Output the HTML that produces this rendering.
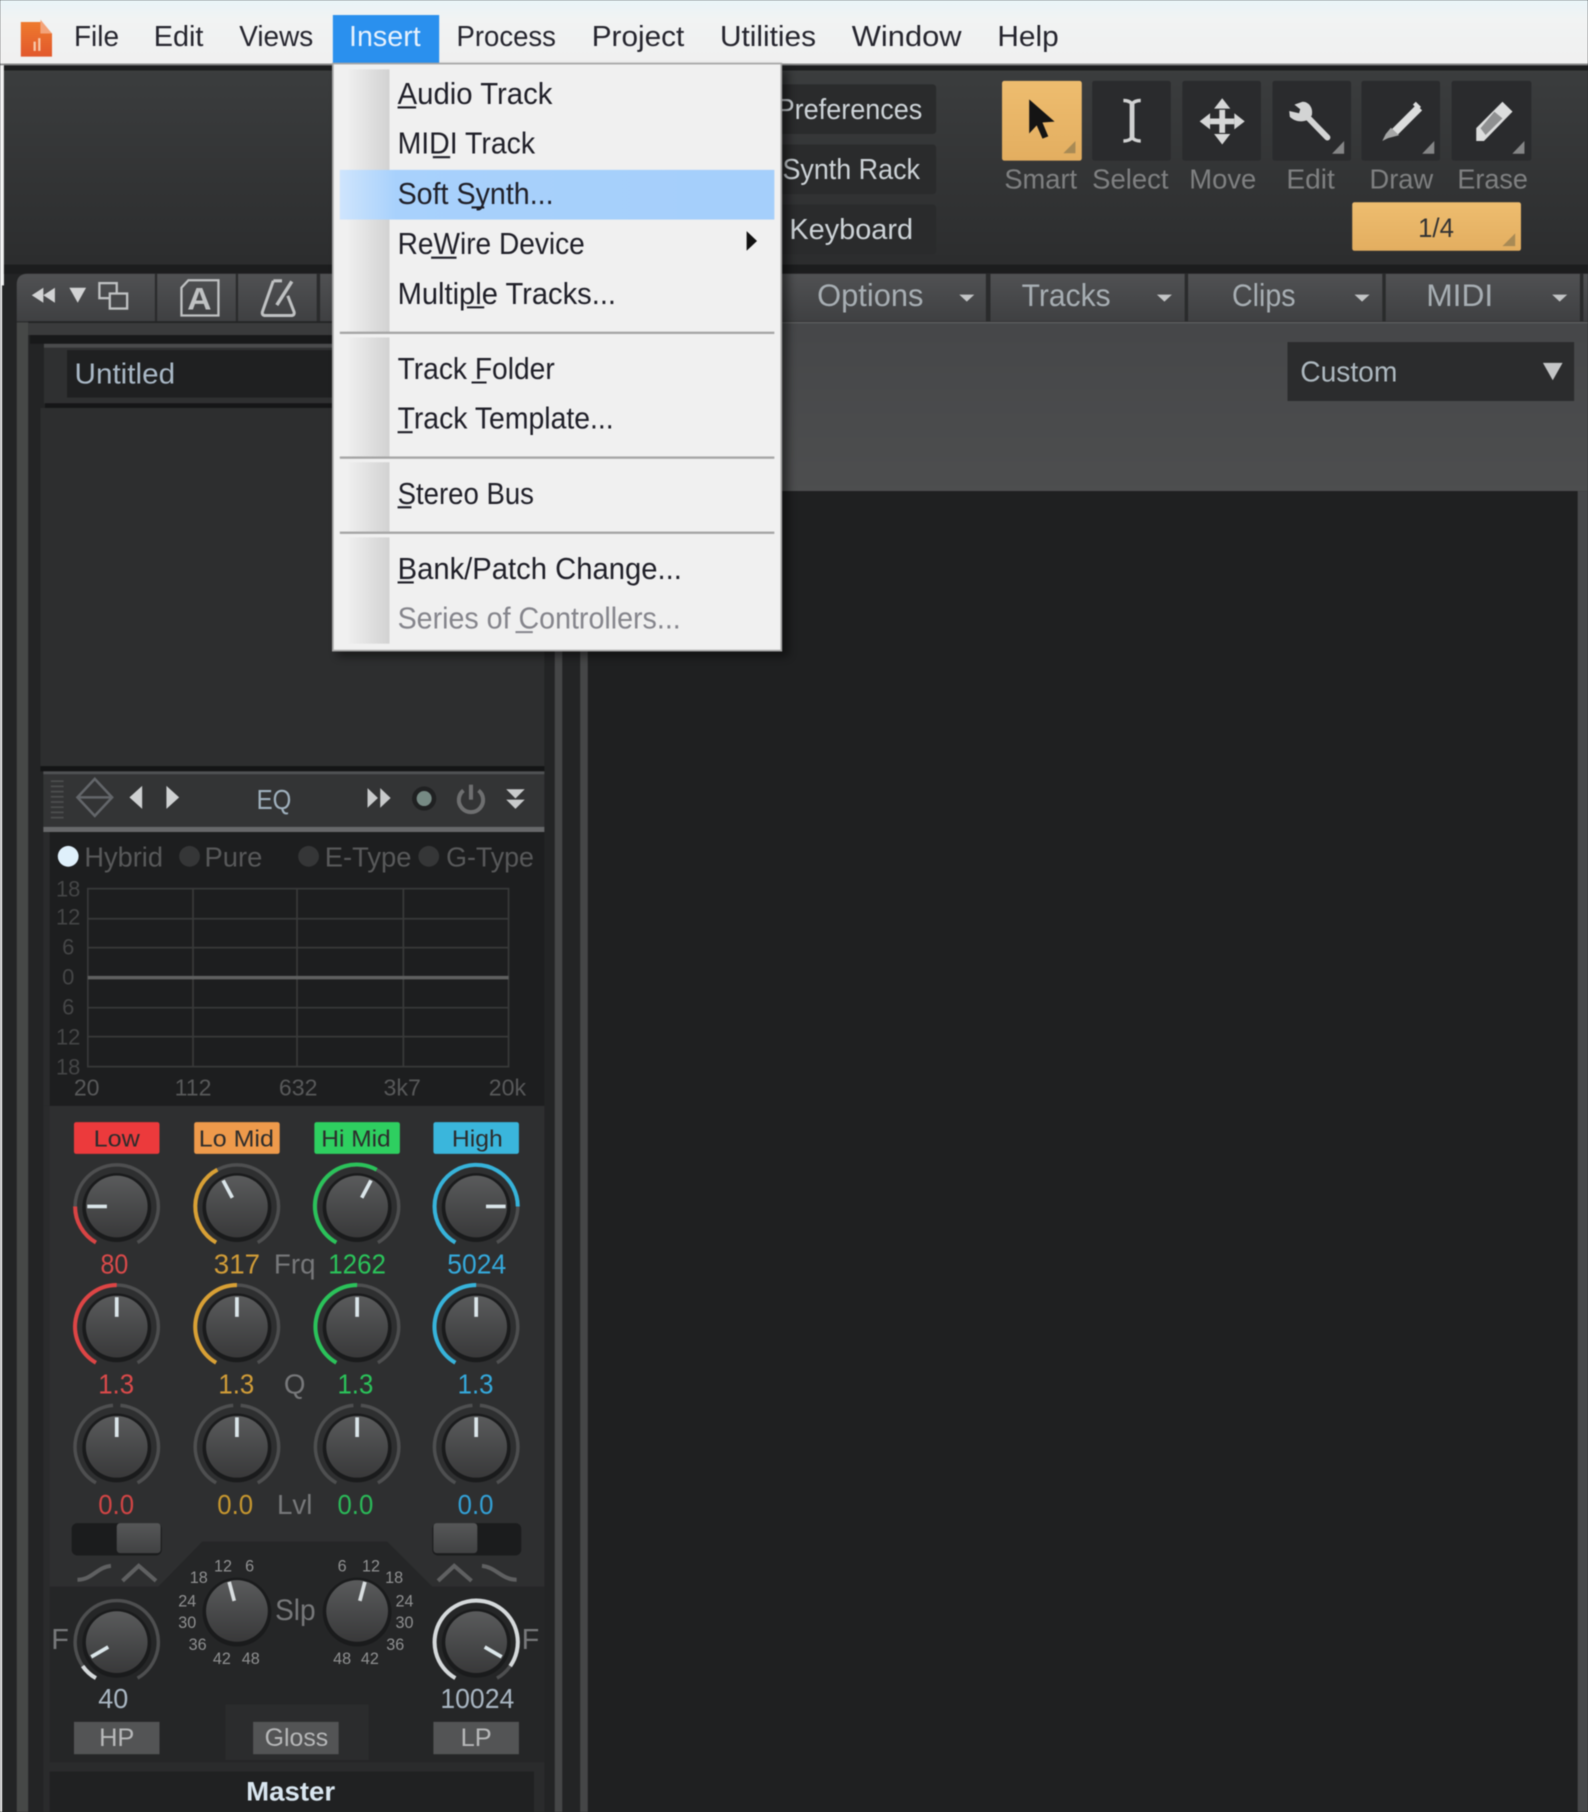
<!DOCTYPE html>
<html><head><meta charset="utf-8"><title>Insert menu</title>
<style>
html,body{margin:0;padding:0;width:1588px;height:1812px;overflow:hidden;background:#252627}
svg{display:block;filter:blur(.6px)}
text{font-family:"Liberation Sans",sans-serif}
.mb{font-size:25px;fill:#25252e}
.mi{font-size:26.5px;fill:#1f1f28}
.tb{font-size:25px;fill:#cdd3d7}
.tl{font-size:24px;fill:#7f8081}
.tab{font-size:27px;fill:#a7aeb3}
.ax{font-size:19px;fill:#454647;text-anchor:middle}
.ax2{font-size:20px;fill:#58595a;text-anchor:middle}
.rd{font-size:24px;fill:#58595a}
.bn{font-size:20px;fill:#2c2c2c;font-weight:normal}
.v{font-size:24px}
.lab{font-size:24px;fill:#77787a;text-anchor:middle}
.sc{font-size:14px;fill:#8f9091;text-anchor:middle}
.gb{font-size:22px;fill:#b7b8b9;text-anchor:middle}
</style></head>
<body>
<svg width="1588" height="1812" viewBox="0 0 1374 1568" preserveAspectRatio="none" xmlns="http://www.w3.org/2000/svg">
<defs>
<linearGradient id="bar" x1="0" y1="0" x2="0" y2="1"><stop offset="0" stop-color="#e9f4f8"/><stop offset=".3" stop-color="#f1f3f3"/><stop offset="1" stop-color="#f0f0f0"/></linearGradient>
<linearGradient id="tool" x1="0" y1="0" x2="0" y2="1"><stop offset="0" stop-color="#3b3d3e"/><stop offset="1" stop-color="#2c2d2e"/></linearGradient>
<linearGradient id="tabg" x1="0" y1="0" x2="0" y2="1"><stop offset="0" stop-color="#505153"/><stop offset="1" stop-color="#3f4042"/></linearGradient>
<linearGradient id="main" x1="0" y1="0" x2="0" y2="1"><stop offset="0" stop-color="#464749"/><stop offset="1" stop-color="#4d4e4f"/></linearGradient>
<linearGradient id="org" x1="0" y1="0" x2="0" y2="1"><stop offset="0" stop-color="#eebd6f"/><stop offset="1" stop-color="#e3ae60"/></linearGradient>
<linearGradient id="gut" x1="0" y1="0" x2="1" y2="0"><stop offset="0" stop-color="#f0f0f0"/><stop offset="1" stop-color="#d2d2d2"/></linearGradient>
<linearGradient id="hl" x1="0" y1="0" x2="1" y2="0"><stop offset="0" stop-color="#cfe5fd"/><stop offset=".13" stop-color="#a8d1fc"/><stop offset="1" stop-color="#a5cffb"/></linearGradient>
<linearGradient id="logo" x1="0" y1="0" x2="0" y2="1"><stop offset="0" stop-color="#ee7a2e"/><stop offset="1" stop-color="#e2582c"/></linearGradient>
<linearGradient id="kn" x1="0" y1="0" x2="0" y2="1"><stop offset="0" stop-color="#5a5b5c"/><stop offset=".55" stop-color="#474849"/><stop offset="1" stop-color="#39393a"/></linearGradient>
<linearGradient id="th" x1="0" y1="0" x2="0" y2="1"><stop offset="0" stop-color="#565758"/><stop offset="1" stop-color="#414243"/></linearGradient>
<filter id="sh" x="-10%" y="-10%" width="120%" height="120%"><feGaussianBlur stdDeviation="4"/></filter>
<g id="knob">
  <circle r="29.800" cy="1" fill="#1a1b1c"/>
  <circle r="26.700" fill="url(#kn)"/>
</g>
<path id="ring" d="M-18 31.2A36 36 0 1 1 18 31.2" fill="none" stroke="#4e4f50" stroke-width="3"/>
<path id="ringz" d="M-18 31.2A36 36 0 0 1 -3.2 -35.9M3.2 -35.9A36 36 0 0 1 18 31.2" fill="none" stroke="#4e4f50" stroke-width="3"/>
<line id="tick" x1="0" y1="-8.500" x2="0" y2="-25.500" stroke="#dbe6ea" stroke-width="3.200"/>
<path id="tri" d="M0 11L10.500 11L10.500 0Z" fill="#858687"/>
</defs>

<!-- background -->
<rect width="1374" height="1568" fill="#232425"/>
<rect x="0" y="0" width="1.800" height="1568" fill="#f2f2f2"/>
<rect x="0" y="0" width="3.400" height="247" fill="#f2f2f2"/>
<!-- menu bar -->
<rect x="0" width="1374" height="55" fill="url(#bar)"/>
<rect x="0" y="55" width="1374" height="1.500" fill="#8b8c8c"/>
<!-- toolbar -->
<rect x="3.400" y="57" width="1371" height="4" fill="#1d1e1f"/>
<rect x="3.400" y="61" width="1371" height="168" fill="url(#tool)"/>
<rect x="3.400" y="229" width="1371" height="8" fill="#1c1d1e"/>

<!-- logo -->
<path d="M18 19H35L45 29V49H18Z" fill="url(#logo)"/>
<path d="M35 17L45 29H35Z" fill="#f3a37a"/>
<path d="M29 36h2v8h-2zM33 33h2v11h-2z" fill="#f7c7a8"/>

<text class="mb" x="64" y="40" textLength="39" lengthAdjust="spacingAndGlyphs">File</text>
<text class="mb" x="133" y="40" textLength="43" lengthAdjust="spacingAndGlyphs">Edit</text>
<text class="mb" x="207" y="40" textLength="64" lengthAdjust="spacingAndGlyphs">Views</text>
<rect x="288" y="13" width="92" height="42" fill="#2a90ee"/>
<text class="mb" style="fill:#e6f1fd" x="302" y="40" textLength="62" lengthAdjust="spacingAndGlyphs">Insert</text>
<text class="mb" x="395" y="40" textLength="86" lengthAdjust="spacingAndGlyphs">Process</text>
<text class="mb" x="512" y="40" textLength="80" lengthAdjust="spacingAndGlyphs">Project</text>
<text class="mb" x="623" y="40" textLength="83" lengthAdjust="spacingAndGlyphs">Utilities</text>
<text class="mb" x="737" y="40" textLength="95" lengthAdjust="spacingAndGlyphs">Window</text>
<text class="mb" x="863" y="40" textLength="53" lengthAdjust="spacingAndGlyphs">Help</text>

<!-- left toolbar buttons -->
<rect x="660" y="73" width="150" height="43" rx="3" fill="#2a2b2c"/>
<rect x="660" y="125" width="150" height="43" rx="3" fill="#2a2b2c"/>
<rect x="660" y="177" width="150" height="43" rx="3" fill="#2a2b2c"/>
<text class="tb" x="672" y="103" textLength="126" lengthAdjust="spacingAndGlyphs">Preferences</text>
<text class="tb" x="677" y="155" textLength="119" lengthAdjust="spacingAndGlyphs">Synth Rack</text>
<text class="tb" x="683" y="207" textLength="107" lengthAdjust="spacingAndGlyphs">Keyboard</text>

<!-- tool buttons -->
<rect x="867" y="70" width="69" height="69" rx="2" fill="url(#org)"/>
<rect x="945" y="70" width="68" height="69" rx="2" fill="#2a2b2d"/>
<rect x="1023" y="70" width="68" height="69" rx="2" fill="#2a2b2d"/>
<rect x="1101" y="70" width="68" height="69" rx="2" fill="#2a2b2d"/>
<rect x="1178" y="70" width="68" height="69" rx="2" fill="#2a2b2d"/>
<rect x="1256" y="70" width="69" height="69" rx="2" fill="#2a2b2d"/>
<path d="M890.500 86V115.500L897 108.500L902 120L907 118L902 106L912.500 105.300Z" fill="#141414"/>
<path d="M972 87C976 87 978 88 979.500 90C981 88 983 87 987 87M979.500 90V119M972 122C976 122 978 121 979.500 119C981 121 983 122 987 122" stroke="#d0d1d1" stroke-width="3" fill="none"/>
<path d="M979.500 90V119" stroke="#cfd0d0" stroke-width="4.200"/>
<g fill="#d6d7d7"><path d="M1055 95h5v20h-5z"/><path d="M1047 102.500h21v5h-21z"/><path d="M1057.500 85l7 9h-14zM1057.500 125l7-9h-14zM1038 105l9-7v14zM1077 105l-9-7v14z"/></g>
<path d="M1131 101L1148.500 119" stroke="#d3d4d4" stroke-width="5.200" stroke-linecap="round"/>
<path d="M1127 88L1120 90.500L1125 94.500L1124 98L1115.500 96L1116 101C1120 105 1126 106 1131 104L1135 100C1136.500 94 1133 88 1127 88Z" fill="#d3d4d4"/>
<path d="M1228 93L1207 114" stroke="#dcdddd" stroke-width="7"/>
<path d="M1225 88l4.500 4.500l-2.500 2.500l-4.500 -4.500z" fill="#dcdddd"/>
<path d="M1203.500 110.500L1210.500 117L1201 119.500L1196 122L1199 116Z" fill="#a5a6a6"/>
<path d="M1300 88L1308.700 96.600L1284 122H1277.300V110.900Z" fill="#dcdddd"/>
<path d="M1293 96.600L1300 102.400L1285.400 116.800L1281 111Z" fill="#8f9091"/>
<path d="M0 0" fill="none"/>
<path d="M920 132.600L930.500 132.600L930.500 122Z" fill="#a88a55"/>
<use href="#tri" x="1152.500" y="122"/>
<use href="#tri" x="1230.500" y="122"/>
<use href="#tri" x="1308.500" y="122"/>
<text class="tl" x="869" y="163" textLength="63" lengthAdjust="spacingAndGlyphs">Smart</text>
<text class="tl" x="945" y="163" textLength="66" lengthAdjust="spacingAndGlyphs">Select</text>
<text class="tl" x="1029" y="163" textLength="58" lengthAdjust="spacingAndGlyphs">Move</text>
<text class="tl" x="1113" y="163" textLength="42" lengthAdjust="spacingAndGlyphs">Edit</text>
<text class="tl" x="1185" y="163" textLength="55" lengthAdjust="spacingAndGlyphs">Draw</text>
<text class="tl" x="1261" y="163" textLength="61" lengthAdjust="spacingAndGlyphs">Erase</text>
<rect x="1170" y="175" width="146" height="42" rx="2" fill="url(#org)"/>
<text x="1227" y="205" font-size="23" fill="#333" textLength="31" lengthAdjust="spacingAndGlyphs">1/4</text>
<path d="M1300 213L1311 213L1311 202Z" fill="#a88a55"/>

<!-- tab row -->
<path d="M14.500 246Q14.500 236.500 24 236.500H1374V279H14.500Z" fill="#2a2b2c"/>
<path d="M14.500 278V246Q14.500 237 24 237H134V278Z" fill="url(#tabg)"/>
<rect x="136" y="237" width="68" height="41" fill="url(#tabg)"/>
<rect x="206" y="237" width="68" height="41" fill="url(#tabg)"/>
<rect x="277" y="237" width="30" height="41" fill="url(#tabg)"/>
<rect x="660" y="237" width="193" height="41" fill="url(#tabg)"/>
<rect x="857" y="237" width="168" height="41" fill="url(#tabg)"/>
<rect x="1028" y="237" width="168" height="41" fill="url(#tabg)"/>
<rect x="1199" y="237" width="168" height="41" fill="url(#tabg)"/>
<rect x="1370" y="237" width="4" height="41" fill="url(#tabg)"/>
<path d="M37.500 249v13l-10-6.500zM47.500 249v13l-10-6.500z" fill="#d2d3d4"/>
<path d="M60 249h14.500l-7.250 13z" fill="#d2d3d4"/>
<rect x="86" y="245" width="15" height="13" fill="none" stroke="#bfc1c2" stroke-width="2"/>
<rect x="95" y="254" width="15" height="13" fill="#47484a" stroke="#bfc1c2" stroke-width="2"/>
<path d="M163 242.500H189V273H157V249Z" fill="none" stroke="#bfc1c2" stroke-width="2"/>
<text x="172.500" y="268" font-size="27" font-weight="bold" fill="#bfc1c2" text-anchor="middle" textLength="21" lengthAdjust="spacingAndGlyphs" dx="-10.500" style="text-anchor:start">A</text>
<path d="M236.500 243H244M249 256L254.500 270Q255 273 252 273H229.500Q226.500 273 227 270L236.500 243" fill="none" stroke="#bfc1c2" stroke-width="2.600" stroke-linejoin="round"/>
<path d="M239.500 264L252.500 243.500" stroke="#bfc1c2" stroke-width="3"/>
<text class="tab" x="707" y="265" textLength="92" lengthAdjust="spacingAndGlyphs">Options</text>
<text class="tab" x="884" y="265" textLength="77" lengthAdjust="spacingAndGlyphs">Tracks</text>
<text class="tab" x="1066" y="265" textLength="55" lengthAdjust="spacingAndGlyphs">Clips</text>
<text class="tab" x="1234" y="265" textLength="58" lengthAdjust="spacingAndGlyphs">MIDI</text>
<path d="M830 255h13l-6.500 6zM1001 255h13l-6.500 6zM1172 255h13l-6.500 6zM1343 255h13l-6.500 6z" fill="#c3c5c6"/>

<!-- main area -->
<rect x="480" y="278.500" width="894" height="1.500" fill="#5a5b5c"/>
<rect x="24.500" y="278" width="456" height="1.500" fill="#242526"/>
<rect x="24.500" y="279.500" width="456" height="10.500" fill="#3a3b3c"/>
<rect x="480" y="280" width="894" height="145" fill="url(#main)"/>
<rect x="1365" y="425" width="9" height="1143" fill="#47484a"/>
<rect x="509" y="425" width="856" height="1143" fill="#1f2021"/>
<rect x="1114" y="296" width="248" height="51" fill="#2b2c2d"/>
<text x="1125" y="330" font-size="25" fill="#adb8bf" textLength="84" lengthAdjust="spacingAndGlyphs">Custom</text>
<path d="M1335 314h17l-8.500 15z" fill="#c4c6c7"/>
<rect x="480" y="425" width="6.500" height="1143" fill="#454647"/>
<rect x="502" y="425" width="6.500" height="1143" fill="#454647"/>

<!-- left panel -->
<rect x="14.500" y="279" width="10" height="1289" fill="#464847"/>
<rect x="24.500" y="290" width="10" height="1278" fill="#232425"/>
<rect x="26" y="290" width="455" height="7.500" fill="#18191a"/>
<rect x="38" y="297.500" width="442" height="3.500" fill="#4a4b4c"/>
<rect x="38" y="301" width="442" height="48" fill="#2f3031"/>
<rect x="58" y="303" width="420" height="41" fill="#1f2021"/>
<rect x="39" y="349" width="440" height="4" fill="#151617"/>
<text x="64.500" y="332" font-size="25" fill="#a9b8c6" textLength="87" lengthAdjust="spacingAndGlyphs">Untitled</text>
<rect x="35" y="353" width="436" height="310" fill="#2d2e2f"/>
<rect x="35" y="663" width="436" height="4.500" fill="#141516"/>

<!-- EQ header -->
<rect x="37.500" y="667.500" width="433.500" height="48" fill="#333435"/>
<rect x="37.500" y="667.500" width="433.500" height="2.500" fill="#505153"/>
<rect x="37.500" y="715.500" width="433.500" height="4.500" fill="#67686a"/>
<path d="M44 676h11M44 680.500h11M44 685h11M44 689.500h11M44 694h11M44 698.500h11M44 703h11M44 707.500h11" stroke="#4d4e4f" stroke-width="1.500"/>
<path d="M82 674L97 690L82 706L67 690ZM67 690H97" fill="none" stroke="#63666a" stroke-width="2.200"/>
<path d="M123 680v20l-11-10zM144 680v20l11-10z" fill="#cfd1d2"/>
<text x="222" y="700" font-size="24" fill="#9fb0bd" textLength="30" lengthAdjust="spacingAndGlyphs">EQ</text>
<path d="M318 682v17l9-8.500zM329 682v17l9-8.500z" fill="#c8cacb"/>
<circle cx="367" cy="691" r="10.500" fill="#202122"/><circle cx="367" cy="691" r="6.500" fill="#768a84"/>
<path d="M401 684A10.500 10.500 0 1 0 414 684" fill="none" stroke="#6e6f70" stroke-width="3.500"/><path d="M407.500 679V692" stroke="#6e6f70" stroke-width="3.500"/>
<path d="M438 683h16l-8 8zM438 692h16l-8 8z" fill="#c8cacb"/>

<!-- EQ graph -->
<rect x="37.500" y="720" width="433.500" height="237" fill="#2a2b2c"/>
<rect x="43" y="720" width="428" height="237" fill="#1d1e1f"/>
<circle cx="59" cy="741" r="9" fill="#dff0fb"/>
<text class="rd" x="73" y="750" textLength="68" lengthAdjust="spacingAndGlyphs">Hybrid</text>
<circle cx="164" cy="741" r="9" fill="#353637"/>
<text class="rd" x="177" y="750" textLength="50" lengthAdjust="spacingAndGlyphs">Pure</text>
<circle cx="267" cy="741" r="9" fill="#353637"/>
<text class="rd" x="281" y="750" textLength="75" lengthAdjust="spacingAndGlyphs">E-Type</text>
<circle cx="371" cy="741" r="9" fill="#353637"/>
<text class="rd" x="386" y="750" textLength="76" lengthAdjust="spacingAndGlyphs">G-Type</text>
<g stroke="#383939" stroke-width="1.500" fill="none">
<rect x="76" y="769" width="364" height="154"/>
<path d="M76 795H440M76 820H440M76 872H440M76 897H440M167 769V923M257 769V923M349 769V923"/>
</g>
<path d="M76 846H440" stroke="#5f6060" stroke-width="3"/>
<text class="ax" x="59" y="776">18</text><text class="ax" x="59" y="800">12</text><text class="ax" x="59" y="826">6</text><text class="ax" x="59" y="852">0</text><text class="ax" x="59" y="878">6</text><text class="ax" x="59" y="904">12</text><text class="ax" x="59" y="930">18</text>
<text class="ax2" x="75" y="948">20</text><text class="ax2" x="167" y="948">112</text><text class="ax2" x="258" y="948">632</text><text class="ax2" x="348" y="948">3k7</text><text class="ax2" x="439" y="948">20k</text>

<!-- band section -->
<rect x="37.500" y="957" width="433.500" height="611" fill="#2a2b2c"/>
<rect x="43" y="957" width="428" height="416" fill="#2e2f30"/>
<path d="M43 1373H137L175 1334H335L374 1373H471V1525H43Z" fill="#252627"/>
<rect x="195" y="1475" width="124" height="48" fill="#2b2c2d"/>
<rect x="64" y="971" width="74" height="27.500" rx="2" fill="#ec3a3c"/>
<rect x="168" y="971" width="74" height="27.500" rx="2" fill="#ee9a4b"/>
<rect x="272" y="971" width="74" height="27.500" rx="2" fill="#2ecf60"/>
<rect x="375" y="971" width="74" height="27.500" rx="2" fill="#3ab6dc"/>
<text class="bn" x="81" y="992" textLength="40" lengthAdjust="spacingAndGlyphs">Low</text>
<text class="bn" x="172" y="992" textLength="65" lengthAdjust="spacingAndGlyphs">Lo Mid</text>
<text class="bn" x="278" y="992" textLength="60" lengthAdjust="spacingAndGlyphs">Hi Mid</text>
<text class="bn" x="391" y="992" textLength="44" lengthAdjust="spacingAndGlyphs">High</text>

<!-- frequency knobs -->
<g transform="translate(101,1044)"><use href="#ring"/><path d="M-18 31.200A36 36 0 0 1 -36 0" fill="none" stroke="#d84444" stroke-width="3.500"/><use href="#knob"/><use href="#tick" transform="rotate(-90)"/></g>
<g transform="translate(205,1044)"><use href="#ring"/><path d="M-18 31.200A36 36 0 0 1 -16.900 -31.800" fill="none" stroke="#d8a035" stroke-width="3.500"/><use href="#knob"/><use href="#tick" transform="rotate(-28)"/></g>
<g transform="translate(309,1044)"><use href="#ring"/><path d="M-18 31.200A36 36 0 1 1 16.900 -31.800" fill="none" stroke="#2bc25a" stroke-width="3.500"/><use href="#knob"/><use href="#tick" transform="rotate(28)"/></g>
<g transform="translate(412,1044)"><use href="#ring"/><path d="M-18 31.200A36 36 0 1 1 36 0" fill="none" stroke="#37b3da" stroke-width="3.500"/><use href="#knob"/><use href="#tick" transform="rotate(90)"/></g>
<text class="v" fill="#d94a4a" x="87" y="1102" textLength="24" lengthAdjust="spacingAndGlyphs">80</text>
<text class="v" fill="#d09c38" x="185" y="1102" textLength="40" lengthAdjust="spacingAndGlyphs">317</text>
<text class="lab" x="255" y="1102">Frq</text>
<text class="v" fill="#2bc25a" x="284" y="1102" textLength="50" lengthAdjust="spacingAndGlyphs">1262</text>
<text class="v" fill="#35a8da" x="387" y="1102" textLength="51" lengthAdjust="spacingAndGlyphs">5024</text>

<!-- Q knobs -->
<g transform="translate(101,1148)"><use href="#ring"/><path d="M-18 31.200A36 36 0 0 1 0 -36" fill="none" stroke="#dd4545" stroke-width="3.500"/><use href="#knob"/><use href="#tick"/></g>
<g transform="translate(205,1148)"><use href="#ring"/><path d="M-18 31.200A36 36 0 0 1 0 -36" fill="none" stroke="#d8a035" stroke-width="3.500"/><use href="#knob"/><use href="#tick"/></g>
<g transform="translate(309,1148)"><use href="#ring"/><path d="M-18 31.200A36 36 0 0 1 0 -36" fill="none" stroke="#2bc25a" stroke-width="3.500"/><use href="#knob"/><use href="#tick"/></g>
<g transform="translate(412,1148)"><use href="#ring"/><path d="M-18 31.200A36 36 0 0 1 0 -36" fill="none" stroke="#37b3da" stroke-width="3.500"/><use href="#knob"/><use href="#tick"/></g>
<text class="v" fill="#d94a4a" x="85" y="1206" textLength="31" lengthAdjust="spacingAndGlyphs">1.3</text>
<text class="v" fill="#d09c38" x="189" y="1206" textLength="31" lengthAdjust="spacingAndGlyphs">1.3</text>
<text class="lab" x="255" y="1206">Q</text>
<text class="v" fill="#2bc25a" x="292" y="1206" textLength="31" lengthAdjust="spacingAndGlyphs">1.3</text>
<text class="v" fill="#35a8da" x="396" y="1206" textLength="31" lengthAdjust="spacingAndGlyphs">1.3</text>

<!-- Lvl knobs -->
<g transform="translate(101,1252)"><use href="#ringz"/><use href="#knob"/><use href="#tick"/></g>
<g transform="translate(205,1252)"><use href="#ringz"/><use href="#knob"/><use href="#tick"/></g>
<g transform="translate(309,1252)"><use href="#ringz"/><use href="#knob"/><use href="#tick"/></g>
<g transform="translate(412,1252)"><use href="#ringz"/><use href="#knob"/><use href="#tick"/></g>
<text class="v" fill="#d04545" x="85" y="1310" textLength="31" lengthAdjust="spacingAndGlyphs">0.0</text>
<text class="v" fill="#c5962f" x="188" y="1310" textLength="31" lengthAdjust="spacingAndGlyphs">0.0</text>
<text class="lab" x="255" y="1310">Lvl</text>
<text class="v" fill="#2bb858" x="292" y="1310" textLength="31" lengthAdjust="spacingAndGlyphs">0.0</text>
<text class="v" fill="#339fd4" x="396" y="1310" textLength="31" lengthAdjust="spacingAndGlyphs">0.0</text>

<!-- switches -->
<rect x="62" y="1318" width="78" height="28" rx="5" fill="#1b1c1d"/>
<rect x="101" y="1318" width="38" height="26" rx="3" fill="url(#th)"/>
<rect x="374" y="1318" width="77" height="28" rx="5" fill="#1b1c1d"/>
<rect x="375" y="1318" width="38" height="26" rx="3" fill="url(#th)"/>
<path d="M67 1367C80 1367 84 1356 96 1355M106 1368L120 1355L135 1368M379 1368L393 1355L408 1368M417 1355C429 1356 434 1367 447 1367" fill="none" stroke="#5f6061" stroke-width="3.500"/>

<!-- slope knobs -->
<g transform="translate(205,1394)"><circle r="29.800" cy="1" fill="#1a1b1c"/><circle r="26.700" fill="url(#kn)"/><line x1="0" y1="-9" x2="0" y2="-26" stroke="#d9dee0" stroke-width="3.200" transform="rotate(-15)"/></g>
<g transform="translate(309,1394)"><circle r="29.800" cy="1" fill="#1a1b1c"/><circle r="26.700" fill="url(#kn)"/><line x1="0" y1="-9" x2="0" y2="-26" stroke="#d9dee0" stroke-width="3.200" transform="rotate(15)"/></g>
<text class="sc" x="193" y="1360">12</text><text class="sc" x="216" y="1360">6</text><text class="sc" x="172" y="1370">18</text><text class="sc" x="162" y="1390">24</text><text class="sc" x="162" y="1409">30</text><text class="sc" x="171" y="1428">36</text><text class="sc" x="192" y="1440">42</text><text class="sc" x="217" y="1440">48</text>
<text class="sc" x="296" y="1360">6</text><text class="sc" x="321" y="1360">12</text><text class="sc" x="341" y="1370">18</text><text class="sc" x="350" y="1390">24</text><text class="sc" x="350" y="1409">30</text><text class="sc" x="342" y="1428">36</text><text class="sc" x="296" y="1440">48</text><text class="sc" x="320" y="1440">42</text>
<text class="lab" x="238" y="1402" style="font-size:26px;text-anchor:start" textLength="35" lengthAdjust="spacingAndGlyphs">Slp</text>

<!-- HP/LP knobs -->
<g transform="translate(101,1421)"><use href="#ring"/><path d="M-18 31.200A36 36 0 0 1 -29.500 20.700" fill="none" stroke="#d5d9db" stroke-width="3.500"/><use href="#knob"/><use href="#tick" transform="rotate(-120)"/></g>
<g transform="translate(412,1421)"><use href="#ring"/><path d="M-18 31.200A36 36 0 1 1 29.500 20.700" fill="none" stroke="#d5d9db" stroke-width="3.500"/><use href="#knob"/><use href="#tick" transform="rotate(120)"/></g>
<text class="lab" style="font-size:25px" x="52" y="1427">F</text>
<text class="lab" style="font-size:25px" x="459" y="1427">F</text>
<text class="v" fill="#a9b6c2" x="85" y="1478" textLength="26" lengthAdjust="spacingAndGlyphs">40</text>
<text class="v" fill="#a9b6c2" x="381" y="1478" textLength="64" lengthAdjust="spacingAndGlyphs">10024</text>
<rect x="64" y="1490" width="74" height="28" fill="#535455"/>
<rect x="219" y="1490" width="74" height="28" fill="#535455"/>
<rect x="375" y="1490" width="74" height="28" fill="#535455"/>
<text class="gb" x="101" y="1511">HP</text>
<text class="gb" style="text-anchor:start" x="229" y="1511" textLength="55" lengthAdjust="spacingAndGlyphs">Gloss</text>
<text class="gb" x="412" y="1511">LP</text>

<!-- master -->
<rect x="37.500" y="1525" width="433.500" height="43" fill="#2a2b2c"/>
<rect x="43" y="1533" width="419" height="35" fill="#202122"/>
<text x="213" y="1558" font-size="23" font-weight="bold" fill="#d9e6f0" textLength="77" lengthAdjust="spacingAndGlyphs">Master</text>

<!-- dropdown menu -->
<rect x="292" y="60" width="390" height="508" fill="#000" opacity=".45" filter="url(#sh)"/>
<rect x="288" y="55" width="388" height="508" fill="#f0f0f0" stroke="#a6a6a6" stroke-width="1.500"/>
<rect x="300" y="60" width="37" height="228" fill="url(#gut)"/>
<rect x="300" y="292" width="37" height="103" fill="url(#gut)"/>
<rect x="300" y="400" width="37" height="60" fill="url(#gut)"/>
<rect x="300" y="465" width="37" height="92" fill="url(#gut)"/>
<rect x="294" y="147" width="376" height="43" fill="url(#hl)"/>
<rect x="294" y="287" width="376" height="2" fill="#a5a5a5"/>
<rect x="294" y="395" width="376" height="2" fill="#a5a5a5"/>
<rect x="294" y="460" width="376" height="2" fill="#a5a5a5"/>
<text class="mi" x="344" y="90" textLength="134" lengthAdjust="spacingAndGlyphs">Audio Track</text>
<text class="mi" x="344" y="133" textLength="119" lengthAdjust="spacingAndGlyphs">MIDI Track</text>
<text class="mi" x="344" y="176.500" textLength="135" lengthAdjust="spacingAndGlyphs">Soft Synth...</text>
<text class="mi" x="344" y="220" textLength="162" lengthAdjust="spacingAndGlyphs">ReWire Device</text>
<text class="mi" x="344" y="263" textLength="189" lengthAdjust="spacingAndGlyphs">Multiple Tracks...</text>
<text class="mi" x="344" y="328" textLength="136" lengthAdjust="spacingAndGlyphs">Track Folder</text>
<text class="mi" x="344" y="371" textLength="187" lengthAdjust="spacingAndGlyphs">Track Template...</text>
<text class="mi" x="344" y="436" textLength="118" lengthAdjust="spacingAndGlyphs">Stereo Bus</text>
<text class="mi" x="344" y="501" textLength="246" lengthAdjust="spacingAndGlyphs">Bank/Patch Change...</text>
<text class="mi" style="fill:#85858c" x="344" y="544" textLength="245" lengthAdjust="spacingAndGlyphs">Series of Controllers...</text>
<path d="M344 93h16M374.500 136h15M408 179.500h11M373 223h22M404 266h15M408 331h13M344 374h13M344 439h12M344 504h14" stroke="#1f1f28" stroke-width="1.800"/>
<path d="M446 547h15" stroke="#85858c" stroke-width="1.800"/>
<path d="M646 200L655 208.500L646 217Z" fill="#111"/>
</svg>
</body></html>
